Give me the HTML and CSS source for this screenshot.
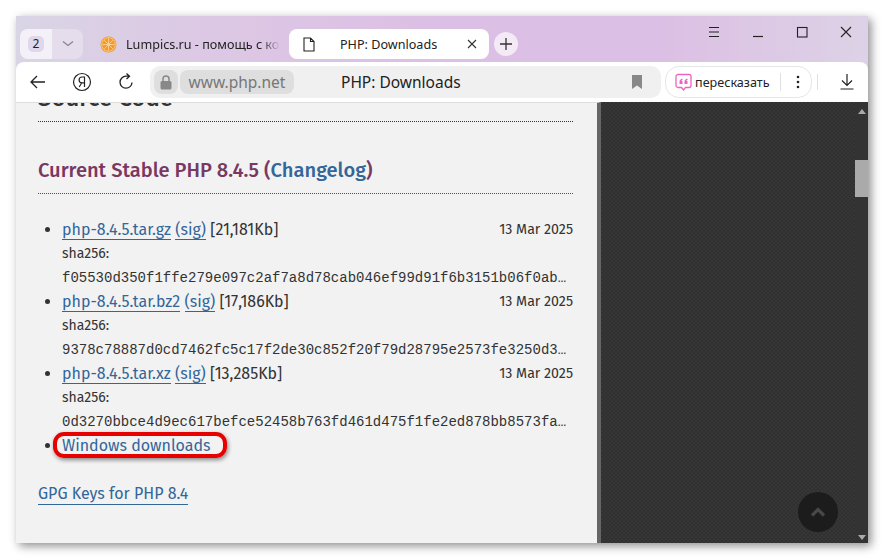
FILE: index.html
```html
<!DOCTYPE html>
<html lang="en">
<head>
<meta charset="utf-8">
<title>PHP: Downloads</title>
<link rel="stylesheet" href="styles.css">
</head>
<body>
<div class="window">
  <header class="titlebar">
    <div class="tabgroup">
      <div class="count"><span class="badge">2</span></div>
      <div class="more"><svg width="14" height="8" viewBox="0 0 14 8"><path d="M2 1.500l5 4 5-4" fill="none" stroke="#8a8494" stroke-width="1.300"/></svg></div>
    </div>
    <div class="tab">
      <svg class="fav" width="17" height="17" viewBox="0 0 17 17"><circle cx="8.500" cy="8.500" r="8" fill="#f39a2b"/><g stroke="#ffd9a0" stroke-width="0.800"><path d="M8.500 2.500v12M2.500 8.500h12M4.300 4.300l8.400 8.400M12.700 4.300l-8.400 8.400"/></g><circle cx="8.500" cy="8.500" r="6.800" fill="none" stroke="#ffd9a0" stroke-width="0.700"/></svg>
      <span class="tabtext">Lumpics.ru - помощь с ком</span>
    </div>
    <div class="tab active">
      <svg width="12" height="15" viewBox="0 0 12 15"><path d="M1 1h6.500L11 4.500V14H1zM7.500 1v3.500H11" fill="none" stroke="#222" stroke-width="1.100"/></svg>
      <span class="tabtitle">PHP: Downloads</span>
      <svg class="tabclose" width="10" height="10" viewBox="0 0 10 10"><path d="M1 1l8 8M9 1l-8 8" stroke="#333" stroke-width="1.100"/></svg>
    </div>
    <div class="newtab"><svg width="14" height="14" viewBox="0 0 14 14"><path d="M7 1v12M1 7h12" stroke="#333" stroke-width="1.300"/></svg></div>
    <div class="winctl">
      <svg width="44" height="20" viewBox="0 0 44 20"><path d="M17 5.500h10M17 10h10M17 14.500h10" stroke="#222" stroke-width="1.100"/></svg>
      <svg width="44" height="20" viewBox="0 0 44 20"><path d="M17 14.500h10" stroke="#222" stroke-width="1.200"/></svg>
      <svg width="44" height="20" viewBox="0 0 44 20"><rect x="17.500" y="5.500" width="9.500" height="9.500" fill="none" stroke="#222" stroke-width="1.100"/></svg>
      <svg width="44" height="20" viewBox="0 0 44 20"><path d="M17 5l10 10M27 5L17 15" stroke="#222" stroke-width="1.100"/></svg>
    </div>
  </header>
  <nav class="toolbar">
    <svg class="tool back" width="16" height="14" viewBox="0 0 16 14"><path d="M15 7H1M7 1L1 7l6 6" fill="none" stroke="#222" stroke-width="1.300"/></svg>
    <svg class="tool ya" width="20" height="20" viewBox="0 0 20 20"><circle cx="10" cy="10" r="8.500" fill="none" stroke="#222" stroke-width="1.200"/><path d="M12.500 15V5H10a2.800 2.800 0 0 0 0 5.800h2.500M9.800 10.800L7.200 15" fill="none" stroke="#222" stroke-width="1.200"/></svg>
    <svg class="tool reload" width="18" height="18" viewBox="0 0 18 18"><path d="M15 9.500A6 6 0 1 1 9 3.200h3M9.500 0.500L12.500 3.200L9.500 6" fill="none" stroke="#222" stroke-width="1.300"/></svg>
    <div class="omni">
      <div class="lock"><svg width="12" height="15" viewBox="0 0 12 15"><rect x="0.500" y="6" width="11" height="8.500" rx="1.500" fill="#888"/><path d="M3 6.500V4a3 3 0 0 1 6 0v2.500" fill="none" stroke="#888" stroke-width="1.500"/></svg></div>
      <div class="host">www.php.net</div>
      <div class="pagetitle">PHP: Downloads</div>
      <svg class="mark" width="10" height="14" viewBox="0 0 10 14"><path d="M0 0h10v14L5 10.500 0 14z" fill="#888"/></svg>
    </div>
    <div class="retell">
      <svg width="17" height="18" viewBox="0 0 17 18"><path d="M3 1.500h11a2 2 0 0 1 2 2v9a2 2 0 0 1-2 2h-3.500L8.500 17l-2-2.500H3a2 2 0 0 1-2-2v-9a2 2 0 0 1 2-2z" fill="#fff" stroke="#f062c0" stroke-width="1.300"/><path d="M7.500 5.500C5.500 6 4.500 7 4.500 8.500V11h3V8H6.200c.1-.5.6-.9 1.300-1.100zM12.500 5.500C10.500 6 9.500 7 9.500 8.500V11h3V8h-1.300c.1-.5.6-.9 1.300-1.100z" fill="#f062c0"/></svg>
      <span class="retelltext">пересказать</span>
      <i class="divider"></i>
      <svg width="4" height="14" viewBox="0 0 4 14"><circle cx="2" cy="2" r="1.300" fill="#222"/><circle cx="2" cy="7" r="1.300" fill="#222"/><circle cx="2" cy="12" r="1.300" fill="#222"/></svg>
    </div>
    <i class="sep"></i>
    <svg class="tool dl" width="14" height="16" viewBox="0 0 14 16"><path d="M7 0v11M2 6.500L7 11.500 12 6.500M0.500 15h13" fill="none" stroke="#222" stroke-width="1.200"/></svg>
  </nav>
  <div class="viewport">
    <main class="page">
      <h2 class="source">Source Code</h2>
      <h3 class="stable">Current Stable PHP 8.4.5 (<a href="#">Changelog</a>)</h3>
      <ul class="files">
        <li><span class="date">13 Mar 2025</span><a href="#">php-8.4.5.tar.gz</a> <a href="#">(sig)</a> [21,181Kb]
          <div class="sha">sha256:</div>
          <div class="hash">f05530d350f1ffe279e097c2af7a8d78cab046ef99d91f6b3151b06f0ab…</div></li>
        <li><span class="date">13 Mar 2025</span><a href="#">php-8.4.5.tar.bz2</a> <a href="#">(sig)</a> [17,186Kb]
          <div class="sha">sha256:</div>
          <div class="hash">9378c78887d0cd7462fc5c17f2de30c852f20f79d28795e2573fe3250d3…</div></li>
        <li><span class="date">13 Mar 2025</span><a href="#">php-8.4.5.tar.xz</a> <a href="#">(sig)</a> [13,285Kb]
          <div class="sha">sha256:</div>
          <div class="hash">0d3270bbce4d9ec617befce52458b763fd461d475f1fe2ed878bb8573fa…</div></li>
        <li><a class="plain circled" href="#">Windows downloads</a></li>
      </ul>
      <a class="gpg" href="#">GPG Keys for PHP 8.4</a>
    </main>
    <aside class="side">
      <div class="totop"><svg width="16" height="10" viewBox="0 0 16 10"><path d="M2 8.500L8 2.500l6 6" fill="none" stroke="#484848" stroke-width="3.200"/></svg></div>
    </aside>
    <div class="scrollbar">
      <svg width="8" height="5" viewBox="0 0 8 5"><path d="M4 0l4 5H0z" fill="#aaa"/></svg>
      <div class="thumb"></div>
      <svg class="down" width="8" height="5" viewBox="0 0 8 5"><path d="M0 0h8L4 5z" fill="#aaa"/></svg>
    </div>
  </div>
</div>
</body>
</html>
```
FILE: styles.css
```css
* { box-sizing: border-box; }
html, body { margin: 0; height: 100%; background: #fff; overflow: hidden; }
body { padding: 16px 0 0 16px; font-family: "Noto Sans", sans-serif; }
.window {
  width: 852px; height: 527px; display: flex; flex-direction: column;
  box-shadow: 3px 3px 9px rgba(0,0,0,.45);
  background: linear-gradient(90deg, #d9d5e6 0%, #dcc9e4 20%, #dcbfe4 50%, #dcbfe4 75%, #dcd2e6 100%);
}
.titlebar { height: 46px; padding: 13px 0 3px 4px; display: flex; align-items: stretch; position: relative; flex: none; }
.tabgroup { width: 63px; display: flex; border-radius: 8px; overflow: hidden; background: #e5dcec; }
.count { width: 32px; background: #f3f0f7; display: flex; align-items: center; justify-content: center; }
.badge { width: 16px; height: 16px; border-radius: 5px; background: #e0d8ea; font-size: 12px; line-height: 16px; text-align: center; color: #222; }
.more { flex: 1; display: flex; align-items: center; justify-content: center; }
.tab { width: 189px; margin-left: 17px; display: flex; align-items: center; overflow: hidden; color: #222; font-size: 12.600px; }
.fav { flex: none; margin-right: 9px; }
.tabtext { white-space: nowrap; overflow: hidden; width: 154px; flex: none; -webkit-mask-image: linear-gradient(90deg, #000 88%, transparent); mask-image: linear-gradient(90deg, #000 88%, transparent); }
.tab.active { width: 200px; margin-left: 0; background: #fff; border-radius: 8px; padding: 0 12px 0 14px; }
.tabtitle { margin-left: 25px; flex: 1; white-space: nowrap; font-size: 12.600px; }
.newtab { width: 24px; height: 24px; margin: 3px 0 0 5px; background: #f3eaf6; border-radius: 50%; display: flex; align-items: center; justify-content: center; }
.winctl { position: absolute; top: 6px; right: 0; display: flex; }
.toolbar { height: 40px; background: #fff; border-radius: 8px 8px 0 0; display: flex; align-items: center; flex: none; position: relative; }
.tool { flex: none; }
.back { margin-left: 14px; }
.ya { margin-left: 26px; }
.reload { margin-left: 25px; }
.omni { width: 511px; height: 32px; margin-left: 15px; background: #f0f0f0; border-radius: 10px; display: flex; align-items: center; padding-left: 4px; }
.lock { width: 24px; height: 24px; background: #dedede; border-radius: 8px; display: flex; align-items: center; justify-content: center; }
.host { width: 114px; height: 24px; margin-left: 2px; background: #dedede; border-radius: 8px; color: #777; font-size: 15.500px; line-height: 24px; text-align: center; }
.pagetitle { margin-left: 47px; font-size: 15.500px; color: #222; white-space: nowrap; }
.mark { margin-left: auto; margin-right: 19px; }
.retell { width: 147px; height: 32px; margin-left: 4px; border: 1px solid #e6e6e6; border-radius: 14px; display: flex; align-items: center; padding-left: 9px; }
.retelltext { margin-left: 3px; font-size: 12.600px; color: #222; white-space: nowrap; width: 80px; }
.divider { width: 1px; height: 18px; background: #e0e0e0; margin: 0 15px 0 5px; }
.sep { width: 1px; height: 16px; background: #e0e0e0; margin-left: 5px; }
.dl { margin-left: 22px; }
.viewport { flex: 1; display: flex; min-height: 0; overflow: hidden; background: #333; }
.page { width: 585px; flex: none; background: #f2f2f2; border-top: 1px solid #ddd; border-right: 4px solid #666; padding: 0 24px 0 22px; font-family: "Fira Sans", "Roboto", sans-serif; font-size: 16px; line-height: 24px; color: #333; overflow: hidden; }
.source { margin: -19px 0 0; height: 38px; font-size: 24px; line-height: 28px; font-weight: 500; color: #333; border-bottom: 1px dotted #333; }
.stable { margin: 35px 0 0; padding-bottom: 9px; font-size: 20.100px; line-height: 27px; font-weight: 500; color: #793862; border-bottom: 1px dotted #793862; }
.stable a { color: #369; text-decoration: none; }
.files { margin: 24px 0 0; padding: 0 0 0 24px; }
.files li { line-height: 24px; }
.files a, .gpg { color: #369; text-decoration: none; border-bottom: 1px solid #369; }
.files a.plain { border: 0; }
.date { float: right; font-size: 14.200px; }
.sha { font-size: 14px; }
.hash { font-family: "Liberation Mono", monospace; font-size: 14px; white-space: nowrap; }
.circled { position: relative; }
.circled::after { content: ""; position: absolute; left: -9px; right: -16px; top: -4px; bottom: -3px; border: 4px solid #e60000; border-radius: 11px; box-shadow: 1px 2px 4px rgba(0,0,0,.45); }
.gpg { display: inline-block; margin-top: 25px; line-height: 21px; }
.side { flex: 1; position: relative; background: repeating-conic-gradient(#303030 0 25%, #363636 0 50%) 0 0 / 4px 4px; }
.totop { position: absolute; right: 17px; bottom: 11px; width: 40px; height: 40px; border-radius: 50%; background: #1c1c1c; display: flex; align-items: center; justify-content: center; }
.scrollbar { width: 13px; flex: none; background: #333; display: flex; flex-direction: column; align-items: center; padding: 7px 0 3px; }
.thumb { width: 13px; height: 37px; margin-top: 46px; background: #aaa; }
.down { margin-top: auto; }
```
